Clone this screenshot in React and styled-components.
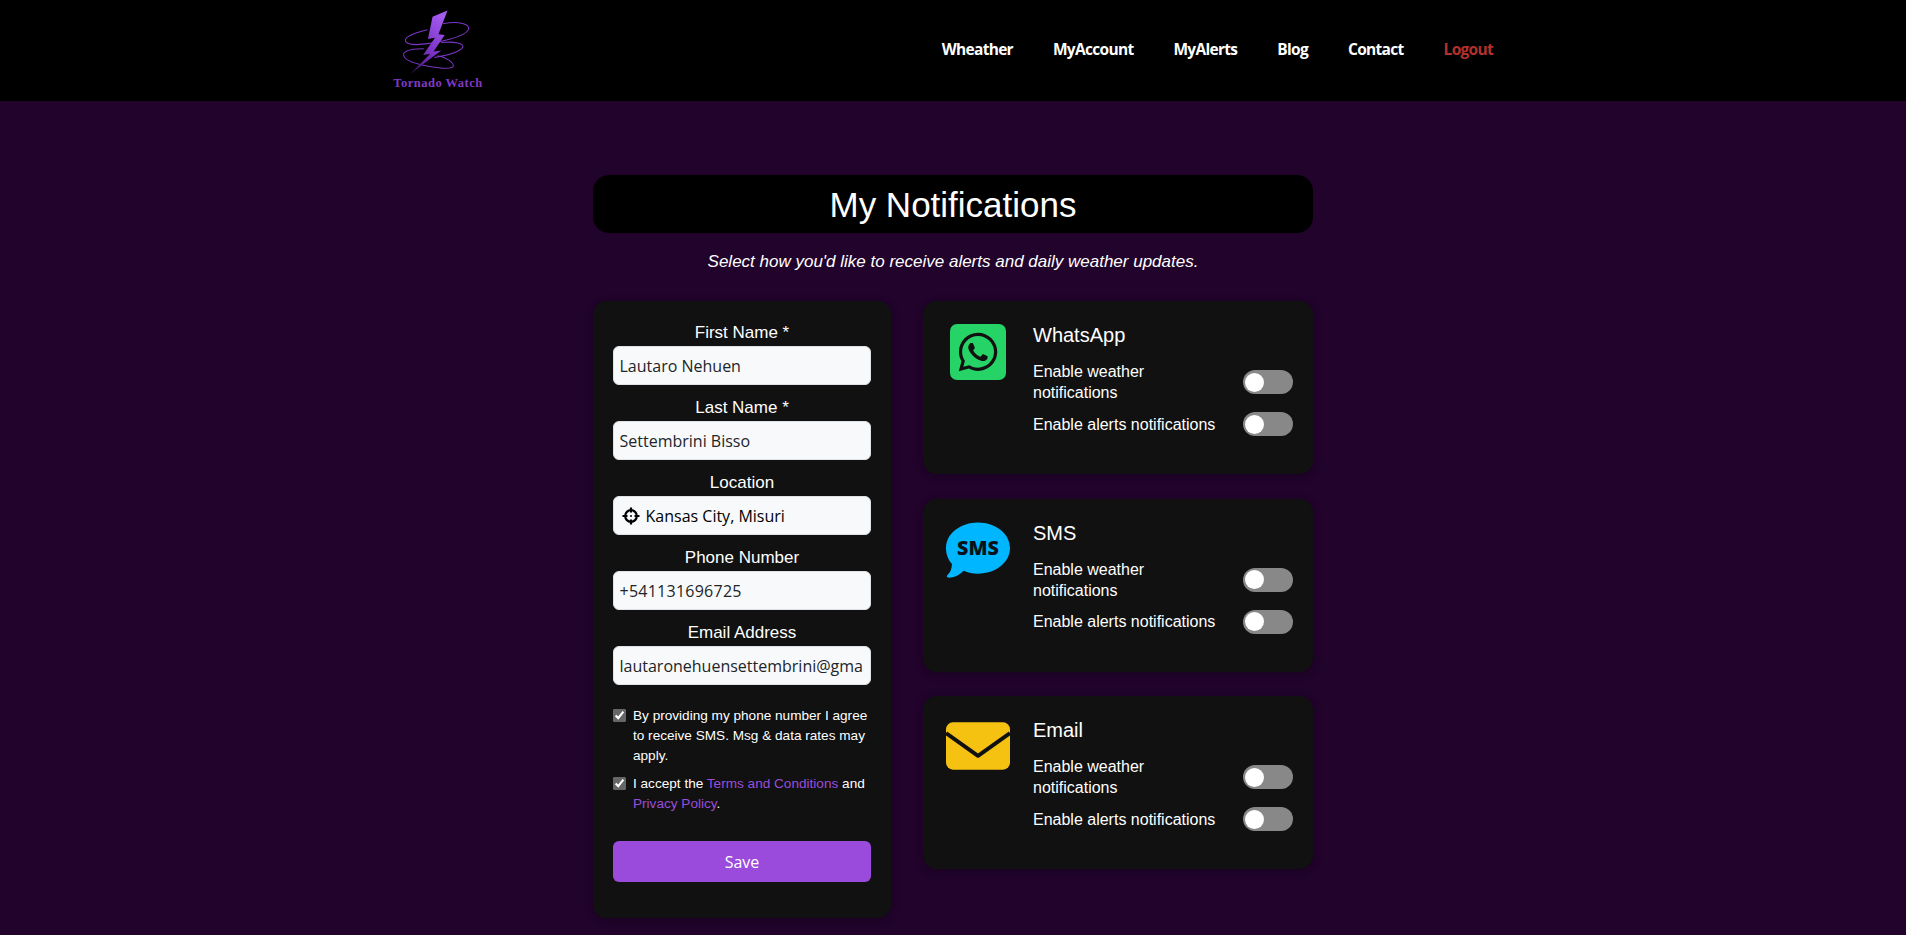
import React from 'react'
import styled, { createGlobalStyle } from 'styled-components'
import { FaWhatsapp } from 'react-icons/fa'

const Global = createGlobalStyle`
  * { box-sizing: border-box; }
  html, body { margin: 0; padding: 0; background: #21032b; }
  body { font-family: "Liberation Sans", Arial, sans-serif; color: #fff; }
`

const Header = styled.header`
  background: #000;
  height: 101px;
`
const HeaderInner = styled.div`
  width: 1120px;
  height: 100%;
  margin: 0 auto;
  display: flex;
  align-items: center;
  justify-content: space-between;
`
const Logo = styled.div`
  width: 90px;
  height: 101px;
  display: flex;
  flex-direction: column;
  align-items: center;
  padding-top: 7px;
`
const LogoMarkBox = styled.div`
  width: 74px;
  height: 69px;
  margin-right: 4px;
`
const LogoText = styled.span`
  font-family: "Liberation Serif", serif;
  font-weight: 700;
  font-size: 12.5px;
  letter-spacing: 0.5px;
  line-height: 14px;
  white-space: nowrap;
  color: #8038c4;
`
const Nav = styled.nav`
  display: flex;
  align-items: center;
  padding-bottom: 3px;
`
const NavLink = styled.a`
  font-family: "Open Sans", sans-serif;
  font-weight: 700;
  font-size: 15.5px;
  letter-spacing: -0.7px;
  padding: 0 20px;
  color: ${p => (p.$danger ? '#b3312c' : '#fff')};
`

const Main = styled.main`
  width: 720px;
  margin: 0 auto;
  padding-top: 74px;
  height: 834px;
`
const TitleBar = styled.h1`
  margin: 0;
  height: 58px;
  background: #000;
  border-radius: 16px;
  text-align: center;
  font-size: 35px;
  font-weight: 400;
  line-height: 59px;
`
const Subtitle = styled.p`
  margin: 18px 0 0;
  text-align: center;
  font-size: 17px;
  font-style: italic;
  line-height: 21px;
`
const Columns = styled.div`
  margin-top: 29px;
  display: grid;
  grid-template-columns: 298px 390px;
  justify-content: space-between;
  align-items: start;
`
const FormCard = styled.form`
  background: #111;
  border-radius: 14px;
  height: 617px;
  padding: 19px 20px 0;
  box-shadow: 0 2px 8px rgba(0, 0, 0, 0.25);
`
const Field = styled.div`
  height: 75px;
  display: flex;
  flex-direction: column;
`
const FieldLabel = styled.label`
  font-size: 17px;
  line-height: 26px;
  height: 26px;
  text-align: center;
`
const InputBox = styled.div`
  height: 39px;
  background: #f8f9fa;
  border-radius: 6px;
  border: 1px solid #dee2e6;
  display: flex;
  align-items: center;
  padding: 0 7px 0 5.5px;
  gap: 6px;
`
const Input = styled.input`
  flex: 1;
  min-width: 0;
  width: 100%;
  border: 0;
  outline: 0;
  background: transparent;
  padding: 0;
  font-family: "Open Sans", sans-serif;
  font-size: 16px;
  letter-spacing: ${p => (p.$spaced ? '0.25px' : '0')};
  color: ${p => (p.$dark ? '#000' : '#212529')};
`
const LocateBox = styled.span`
  display: flex;
  flex: none;
  margin-left: 2px;
`
const Checks = styled.div`
  margin-top: 11px;
  display: flex;
  flex-direction: column;
  gap: 8px;
`
const CheckRow = styled.label`
  display: flex;
  gap: 7px;
  font-size: 13.6px;
  line-height: 20px;
`
const Check = styled.input`
  flex: none;
  width: 13px;
  height: 13px;
  margin: 3px 0 0;
  accent-color: #666;
`
const Link = styled.a`
  color: #9a4ddc;
`
const SaveButton = styled.button`
  display: block;
  width: 100%;
  height: 41px;
  margin-top: 27px;
  border: 0;
  border-radius: 6px;
  background: #9b4bdb;
  color: #fff;
  font-family: "Open Sans", sans-serif;
  font-size: 16px;
`
const Cards = styled.div`
  display: flex;
  flex-direction: column;
  gap: 24.5px;
`
const Card = styled.section`
  background: #111;
  border-radius: 14px;
  height: 173px;
  padding: 23px 20px 0 23px;
  display: flex;
  gap: 23px;
  box-shadow: 0 2px 8px rgba(0, 0, 0, 0.25);
`
const IconCol = styled.div`
  width: 64px;
  flex: none;
  display: flex;
  justify-content: center;
  padding-top: ${p => p.$top || 0}px;
`
const WhatsAppIcon = styled.div`
  width: 56px;
  height: 56px;
  border-radius: 7px;
  background: #25d366;
  color: #111;
  font-size: 44px;
  display: flex;
  align-items: center;
  justify-content: center;
`
const CardBody = styled.div`
  flex: 1;
  display: flex;
  flex-direction: column;
`
const CardTitle = styled.h2`
  margin: 0 0 15px;
  font-size: 20px;
  font-weight: 400;
  line-height: 22px;
`
const Row = styled.div`
  display: flex;
  align-items: center;
  justify-content: space-between;
  margin-bottom: 9px;
`
const RowText = styled.span`
  width: 190px;
  font-size: 16px;
  line-height: 21px;
`
const Toggle = styled.span`
  flex: none;
  position: relative;
  width: 50px;
  height: 24px;
  border-radius: 12px;
  background: #888;
  &::before {
    content: '';
    position: absolute;
    left: 2px;
    top: 2.5px;
    width: 19px;
    height: 19px;
    border-radius: 50%;
    background: #fff;
  }
`

const LogoMark = () => (
  <svg width="74" height="69" viewBox="90 20 210 198">
    <defs>
      <linearGradient id="bolt" x1="0.7" y1="0" x2="0.2" y2="1">
        <stop offset="0" stopColor="#a45cf0" />
        <stop offset="0.55" stopColor="#7d35c9" />
        <stop offset="1" stopColor="#3f1670" />
      </linearGradient>
    </defs>
    <g fill="none" stroke="#7a36c4" strokeWidth="3">
      <path d="M215 68C260 60 295 68 288 85C280 105 200 125 140 128C105 128 100 115 115 105C125 98 150 90 170 85" />
      <path d="M210 122C250 118 275 125 272 135C265 150 220 160 190 165" />
      <path d="M160 140C110 140 95 150 105 165C120 185 235 205 245 190C245 178 225 165 200 160" />
    </g>
    <path d="M228 30L185 48L172 112L192 108L158 158L178 155L120 213L210 145L188 148L220 100L202 98Z" fill="url(#bolt)" />
  </svg>
)

const LocateIcon = () => (
  <LocateBox>
    <svg width="18" height="18" viewBox="0 0 18 18" fill="none" stroke="#000" strokeWidth="2.2">
      <circle cx="9" cy="9" r="5.8" />
      <path d="M9 0.5V5.5M9 12.5V17.5M0.5 9H5.5M12.5 9H17.5" />
      <circle cx="9" cy="9" r="1" fill="#000" stroke="none" />
    </svg>
  </LocateBox>
)

const SmsIcon = () => (
  <svg width="65" height="57" viewBox="0 0 65 57">
    <path d="M32.5 0C50 0 65 11 65 26C65 41 50 52 32.5 52C27 52 22 51 18 49C13 54 7 56.5 2 56C0.5 55.7 0.5 54.5 1.5 53.5C4.5 50.5 6 47 6 42C2 38 0 32 0 26C0 11 15 0 32.5 0Z" fill="#00b6ff" />
    <text x="32.5" y="33" textAnchor="middle" fontFamily="Open Sans, sans-serif" fontWeight="800" fontSize="20" fill="#08121a">SMS</text>
  </svg>
)

const MailIcon = () => (
  <svg width="65" height="48" viewBox="0 0 65 48">
    <rect width="65" height="48" rx="7" fill="#f5c211" />
    <path d="M0 11L32.5 34L65 11" fill="none" stroke="#111" strokeWidth="4" strokeLinejoin="round" />
  </svg>
)

const channels = [
  { name: 'WhatsApp', icon: <WhatsAppIcon><FaWhatsapp /></WhatsAppIcon>, top: 0 },
  { name: 'SMS', icon: <SmsIcon />, top: 0 },
  { name: 'Email', icon: <MailIcon />, top: 3 },
]

const navItems = ['Wheather', 'MyAccount', 'MyAlerts', 'Blog', 'Contact']

function App() {
  return (
    <>
      <Global />
      <Header>
        <HeaderInner>
          <Logo>
            <LogoMarkBox><LogoMark /></LogoMarkBox>
            <LogoText>Tornado Watch</LogoText>
          </Logo>
          <Nav>
            {navItems.map(item => <NavLink key={item}>{item}</NavLink>)}
            <NavLink $danger>Logout</NavLink>
          </Nav>
        </HeaderInner>
      </Header>
      <Main>
        <TitleBar>My Notifications</TitleBar>
        <Subtitle>Select how you'd like to receive alerts and daily weather updates.</Subtitle>
        <Columns>
          <FormCard>
            <Field>
              <FieldLabel>First Name *</FieldLabel>
              <InputBox><Input defaultValue="Lautaro Nehuen" /></InputBox>
            </Field>
            <Field>
              <FieldLabel>Last Name *</FieldLabel>
              <InputBox><Input defaultValue="Settembrini Bisso" /></InputBox>
            </Field>
            <Field>
              <FieldLabel>Location</FieldLabel>
              <InputBox><LocateIcon /><Input $dark defaultValue="Kansas City, Misuri" /></InputBox>
            </Field>
            <Field>
              <FieldLabel>Phone Number</FieldLabel>
              <InputBox><Input $spaced defaultValue="+541131696725" /></InputBox>
            </Field>
            <Field>
              <FieldLabel>Email Address</FieldLabel>
              <InputBox><Input defaultValue="lautaronehuensettembrini@gmail.com" /></InputBox>
            </Field>
            <Checks>
              <CheckRow>
                <Check type="checkbox" defaultChecked />
                <span>By providing my phone number I agree to receive SMS. Msg &amp; data rates may apply.</span>
              </CheckRow>
              <CheckRow>
                <Check type="checkbox" defaultChecked />
                <span>I accept the <Link>Terms and Conditions</Link> and <Link>Privacy Policy</Link>.</span>
              </CheckRow>
            </Checks>
            <SaveButton type="button">Save</SaveButton>
          </FormCard>
          <Cards>
            {channels.map(c => (
              <Card key={c.name}>
                <IconCol $top={c.top}>{c.icon}</IconCol>
                <CardBody>
                  <CardTitle>{c.name}</CardTitle>
                  <Row>
                    <RowText>Enable weather notifications</RowText>
                    <Toggle />
                  </Row>
                  <Row>
                    <RowText>Enable alerts notifications</RowText>
                    <Toggle />
                  </Row>
                </CardBody>
              </Card>
            ))}
          </Cards>
        </Columns>
      </Main>
    </>
  )
}

export default App
